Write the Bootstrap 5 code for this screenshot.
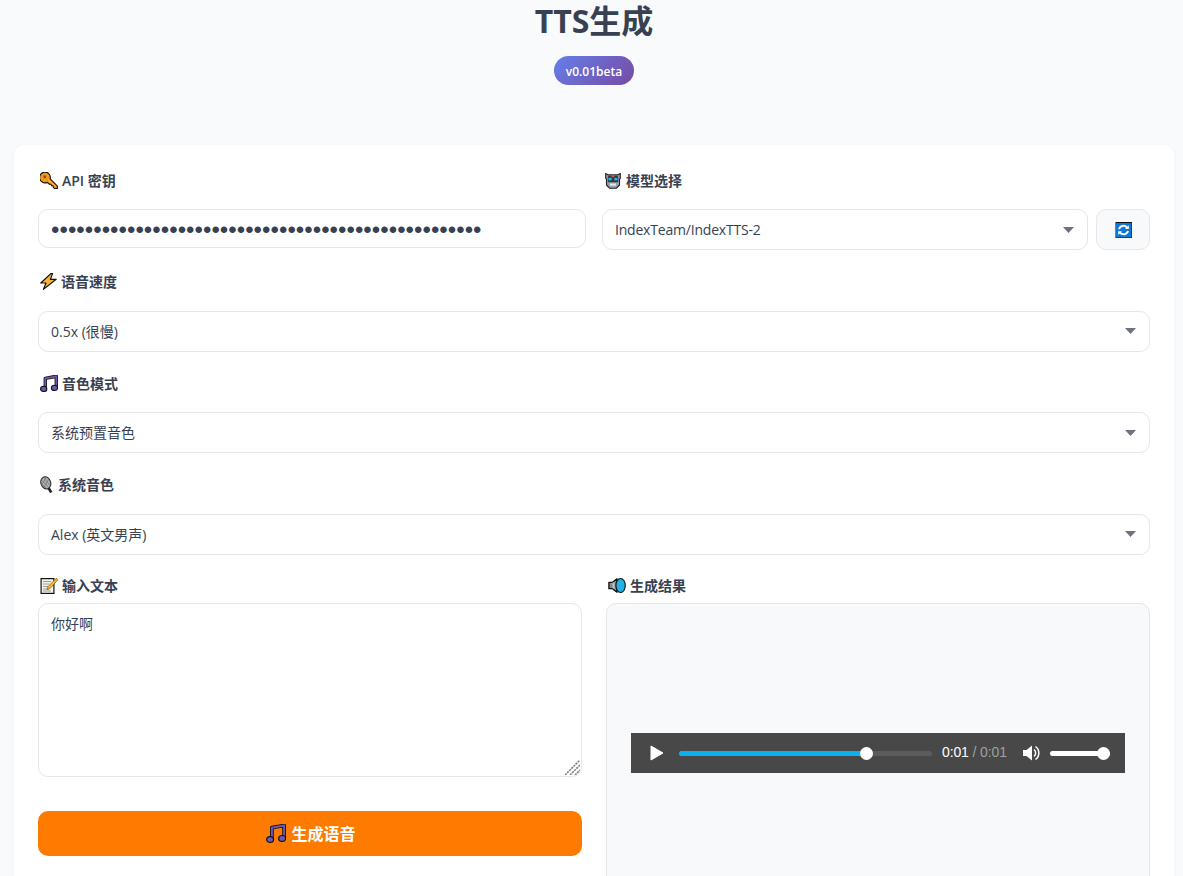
<!DOCTYPE html>
<html lang="zh-CN">
<head>
  <meta charset="UTF-8">
  <meta name="viewport" content="width=device-width, initial-scale=1.0">
  <title>TTS生成</title>

  <link href="https://cdn.jsdelivr.net/npm/bootstrap@5.3.3/dist/css/bootstrap.min.css" rel="stylesheet">

  <style>
    html, body { overflow: hidden; }
    body { background: #f9fafc; color: #374151; font-family: "Open Sans", "Noto Sans CJK SC", sans-serif; font-size: 14px; }
    .page-wrap { padding: 0 9px 0 14px; }
    .page-title { font-size: 32px; font-weight: 700; line-height: 42px; margin: 0 0 14px; color: #374151; }
    .ver-pill { display: inline-block; height: 29px; line-height: 31px; padding: 0 12px; border-radius: 15px; font-size: 12px; font-weight: 600; color: #fff; background: linear-gradient(135deg, #667eea, #764ba2); }
    .head-box { margin-bottom: 60px; text-align: center; }
    .main-panel { background: #fff; border-radius: 10px; padding: 24px; box-shadow: 0 1px 4px rgba(0, 0, 0, .04); }
    .field-label { display: flex; align-items: center; gap: 4px; height: 22px; margin-bottom: 18px; font-size: 14px; font-weight: 600; color: #374151; }
    .field-label svg { margin-left: 2px; }
    .field-label.tight { height: 24px; margin-bottom: 5px; }
    .field-gap { margin-bottom: 20.6px; }
    .field-gap-last { margin-bottom: 19.2px; }
    .two-cols { display: grid; grid-template-columns: 1fr 1fr; column-gap: 16px; }
    .two-cols-wide { display: grid; grid-template-columns: 1fr 1fr; column-gap: 24px; }
    .form-control, .form-select { font-size: 14px; color: #374151; border: 1px solid #e5e7eb; border-radius: 10px; padding: 0 12px; }
    .form-select { height: 41px; background-image: url("data:image/svg+xml,%3csvg xmlns='http://www.w3.org/2000/svg' viewBox='0 0 11 6'%3e%3cpath fill='%236b7280' d='M0 0h11L5.5 6z'/%3e%3c/svg%3e"); background-size: 11px 6px; background-position: right 13px center; }
    .model-select { letter-spacing: -.2px; }
    .key-input { height: 39px; padding-top: 3px; font-family: "Liberation Sans", sans-serif; font-size: 24px; letter-spacing: .04px; }
    .text-input { height: 174px; padding: 9px 12px; resize: none; display: block; }
    .resize-mark { position: absolute; right: 2px; bottom: 2px; pointer-events: none; }
    .refresh-btn { width: 54px; height: 41px; flex: none; display: flex; align-items: center; justify-content: center; padding: 0; background: #f8f9fa; border: 1px solid #e5e7eb; border-radius: 10px; }
    .make-btn { display: flex; align-items: center; justify-content: center; gap: 5px; width: 100%; height: 45px; margin-top: 34px; padding: 1px 0 0 2px; border: 0; border-radius: 10px; background: #ff7b00; color: #fff; font-size: 16px; font-weight: 700; }
    .result-box { height: 300px; display: flex; align-items: center; padding: 0 24px; background: #f8f9fa; border: 1px solid #e5e7eb; border-radius: 10px; }
    .player { width: 100%; height: 40px; display: flex; align-items: center; padding: 0 15px 0 19px; background: #484848; color: #fff; font-family: "Liberation Sans", sans-serif; font-size: 14px; }
    .player-track { position: relative; height: 5px; margin-top: 1px; border-radius: 3px; background: #5c5c5c; }
    .player-track.seek { flex: 1; margin-left: 15px; margin-right: 10px; }
    .player-track.vol { width: 60px; margin-left: 10px; background: #fff; }
    .player-fill { height: 100%; border-radius: 3px; background: #0bb0ee; }
    .player-thumb { position: absolute; top: -4px; width: 13px; height: 13px; margin-left: -6.5px; border-radius: 50%; background: #fff; }
    .player-time { width: 65px; white-space: nowrap; margin-right: 16px; letter-spacing: -.12px; }
    .player-time span { color: #a0a0a0; }
  </style>
</head>
<body>

<svg width="0" height="0" class="d-block" aria-hidden="true">
  <defs>
    <symbol id="ic-key" viewBox="0 0 18 17">
      <path d="M17.400 14.200v2.300h-3l-1.200-1.300v-1.500h-1.500l-.8-1.500H9.400L7.200 10.400A5.400 5.400 0 1 1 10.200 6.800z" fill="#f09a1a" stroke="#111" stroke-width="1.100" stroke-linejoin="round"/>
      <circle cx="4.800" cy="4.800" r="1.500" fill="#8a5606"/>
      <path d="M8 7.500l7.500 7" stroke="#ffc65c" stroke-width="1"/>
    </symbol>
    <symbol id="ic-bolt" viewBox="0 0 17 17">
      <path d="M10.800.6L.8 10h5.200l-2.600 6.400L16.200 6.300h-5.800l2.200-5.700z" fill="#f7b52c" stroke="#111" stroke-width="1.200" stroke-linejoin="round"/>
    </symbol>
    <symbol id="ic-bot" viewBox="0 0 16 17">
      <path d="M.7 1.400l2.700 1.500h9.200l2.700-1.500v5l-.8.7V13l-3 3.200H4.500l-3-3.200V7.100l-.8-.7z" fill="#9aa0a7" stroke="#222" stroke-width="1.100" stroke-linejoin="round"/>
      <rect x="2.800" y="4" width="10.400" height="6.200" rx="1" fill="#2c3844"/>
      <rect x="3.500" y="5.800" width="3.200" height="2.600" fill="#27b5e8"/>
      <rect x="9.300" y="5.800" width="3.200" height="2.600" fill="#27b5e8"/>
      <rect x="6.700" y="3.200" width="2.600" height="2" fill="#e8503a"/>
      <rect x="5" y="11.500" width="6" height="2.200" fill="#e3e6e9"/>
    </symbol>
    <symbol id="ic-notes" viewBox="0 0 18 17">
      <path d="M5.300 14V3.300L16.300 1.300v11.500" fill="none" stroke="#111" stroke-width="3.400" stroke-linejoin="round"/>
      <path d="M5.300 14V3.300L16.300 1.300v11.500" fill="none" stroke="#6f57b8" stroke-width="1.800" stroke-linejoin="round"/>
      <ellipse cx="3.700" cy="13.900" rx="3.100" ry="2.600" fill="#6f57b8" stroke="#111" stroke-width="1.100"/>
      <ellipse cx="14.500" cy="12.900" rx="3.100" ry="2.600" fill="#6f57b8" stroke="#111" stroke-width="1.100"/>
    </symbol>
    <symbol id="ic-mic" viewBox="0 0 14 17">
      <path d="M8.500 12l2.800 4.500" stroke="#222" stroke-width="2.600"/>
      <ellipse cx="5.800" cy="6.800" rx="4.900" ry="6.200" transform="rotate(-18 5.800 6.800)" fill="#b0b0b0" stroke="#222"/>
      <path d="M2.500 4.500l6 7M1.800 7.500l4.500 5M4 2l6.200 7.500M6.500 1l-5 8M9 2.800l-5 8.500" stroke="#707070" stroke-width=".7"/>
    </symbol>
    <symbol id="ic-memo" viewBox="0 0 17 17">
      <rect x=".6" y="1.600" width="12.800" height="14.800" fill="#f4f4ee" stroke="#111" stroke-width="1.200"/>
      <path d="M2.500 4.500h8M2.500 7h6.500M2.500 9.500h5M2.500 12h6M2.500 14h8" stroke="#9a9a9a"/>
      <path d="M16 1L7.500 9.500l-1 3 3-1L17.200 3z" fill="#f5b62b" stroke="#6b4a05" stroke-width=".6"/>
    </symbol>
    <symbol id="ic-speaker" viewBox="0 0 18 17">
      <path d="M.9 5.300h3.600L9 1.800v13.400l-4.500-3.500H.9z" fill="#8a8a8a" stroke="#111" stroke-width="1.300" stroke-linejoin="round"/>
      <rect x="4.600" y="5.500" width="2" height="6" fill="#c4c4c4"/>
      <ellipse cx="12.600" cy="8.500" rx="4.700" ry="7" fill="#22b3e6" stroke="#111" stroke-width="1.100"/>
    </symbol>
    <symbol id="ic-refresh" viewBox="0 0 17 16">
      <rect width="17" height="16" fill="#111"/>
      <rect x="0" y="0" width=".6" height="16" fill="#d9d24a"/>
      <rect x="1" y="1" width="15.500" height="14.500" fill="#0a78d6"/>
      <path d="M4 7.200a4.600 4.600 0 0 1 8-1.600" fill="none" stroke="#fff" stroke-width="2"/>
      <path d="M13.800 3.200v3.800H10z" fill="#fff"/>
      <path d="M13 9a4.600 4.600 0 0 1-8 1.600" fill="none" stroke="#fff" stroke-width="2"/>
      <path d="M3.200 13v-3.800H7z" fill="#fff"/>
    </symbol>
  </defs>
</svg>

<div class="page-wrap">
  <div class="head-box">
    <h1 class="page-title">TTS生成</h1>
    <span class="ver-pill">v0.01beta</span>
  </div>

  <div class="main-panel">
    <!-- 密钥 / 模型 -->
    <div class="two-cols field-gap">
      <div>
        <label class="field-label" for="apiKey"><svg width="18" height="17"><use href="#ic-key"/></svg>API 密钥</label>
        <input type="password" class="form-control key-input" id="apiKey" value="aaaaaaaaaaaaaaaaaaaaaaaaaaaaaaaaaaaaaaaaaaaaaaaaaaa">
      </div>
      <div>
        <label class="field-label" for="model"><svg width="18" height="17"><use href="#ic-bot"/></svg>模型选择</label>
        <div class="d-flex gap-2">
          <select class="form-select model-select" id="model"><option>IndexTeam/IndexTTS-2</option></select>
          <button type="button" class="refresh-btn"><svg width="17" height="16"><use href="#ic-refresh"/></svg></button>
        </div>
      </div>
    </div>

    <div class="field-gap">
      <label class="field-label" for="speed"><svg width="17" height="17"><use href="#ic-bolt"/></svg>语音速度</label>
      <select class="form-select" id="speed"><option>0.5x (很慢)</option></select>
    </div>

    <div class="field-gap">
      <label class="field-label" for="mode"><svg width="18" height="17"><use href="#ic-notes"/></svg>音色模式</label>
      <select class="form-select" id="mode"><option>系统预置音色</option></select>
    </div>

    <div class="field-gap-last">
      <label class="field-label" for="voice"><svg width="14" height="17"><use href="#ic-mic"/></svg>系统音色</label>
      <select class="form-select" id="voice"><option>Alex (英文男声)</option></select>
    </div>

    <!-- 输入 / 结果 -->
    <div class="two-cols-wide">
      <div>
        <label class="field-label tight" for="inputText"><svg width="18" height="17"><use href="#ic-memo"/></svg>输入文本</label>
        <div class="position-relative">
          <textarea class="form-control text-input" id="inputText">你好啊</textarea>
          <svg class="resize-mark" width="15" height="15" viewBox="0 0 15 15"><path d="M0 15L15 0M5 15L15 5M10 15l5-5" stroke="#808080" stroke-width="1.600" stroke-dasharray="2.200 .8"/></svg>
        </div>
        <button type="button" class="make-btn"><svg width="20" height="19"><use href="#ic-notes"/></svg>生成语音</button>
      </div>
      <div>
        <div class="field-label tight"><svg width="18" height="17"><use href="#ic-speaker"/></svg>生成结果</div>
        <div class="result-box">
          <div class="player">
            <svg width="14" height="16" viewBox="0 0 14 16"><path d="M1 1l12 7-12 7z" fill="#fff" stroke="#fff" stroke-linejoin="round"/></svg>
            <div class="player-track seek">
              <div class="player-fill" style="width: 74.3%"></div>
              <div class="player-thumb" style="left: 74.3%"></div>
            </div>
            <div class="player-time">0:01<span> / 0:01</span></div>
            <svg width="17" height="16" viewBox="0 0 17 16"><path d="M0 5h3.500L9 .5v15L3.500 11H0z" fill="#fff"/><path d="M11 4.500a4.500 4.500 0 0 1 0 7" fill="none" stroke="#fff" stroke-width="1.500"/><path d="M12.500 1.500a8 8 0 0 1 0 13" fill="none" stroke="#fff" stroke-width="1.500"/></svg>
            <div class="player-track vol">
              <div class="player-thumb" style="left: 53px"></div>
            </div>
          </div>
        </div>
      </div>
    </div>
  </div>
</div>

<script src="https://cdn.jsdelivr.net/npm/bootstrap@5.3.3/dist/js/bootstrap.bundle.min.js"></script>
</body>
</html>
